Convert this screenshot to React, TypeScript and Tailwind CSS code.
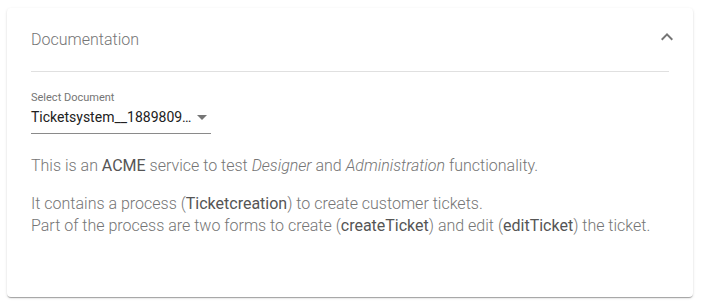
import React, { useState } from 'react'

export default function App() {
  const [open, setOpen] = useState(true)

  return (
    <div className="w-[702px] h-[306px] bg-white pt-2 pl-[7px]" style={{ fontFamily: 'Roboto, "Liberation Sans", sans-serif' }}>
      <div className="w-[686px] h-[289px] bg-white rounded-[4px] shadow-[0_2px_1px_-1px_rgba(0,0,0,0.2),0_1px_1px_0_rgba(0,0,0,0.14),0_1px_3px_0_rgba(0,0,0,0.12)] px-6">
        {/* Header */}
        <button
          onClick={() => setOpen(!open)}
          className="w-full h-16 flex items-center justify-between border-b border-[#e0e0e0] text-left"
        >
          <span className="text-[16px] text-[#757575] font-light">Documentation</span>
          <svg width="24" height="24" viewBox="0 0 24 24" className="mr-[-10px] mt-[-6px]" fill="#757575">
            <path d="M7.41 15.41 12 10.83l4.59 4.58L18 14l-6-6-6 6z" />
          </svg>
        </button>

        {open && (
          <div className="pt-[19px]">
            {/* Select */}
            <div className="w-[180px]">
              <label className="block text-[11px] leading-[13px] text-[#757575]">Select Document</label>
              <div className="flex items-center justify-between h-[30px] pb-[2px] border-b border-[#8a8a8a]">
                <span className="text-[14px] text-[#212121] whitespace-nowrap">Ticketsystem__1889809…</span>
                <svg width="10" height="5" viewBox="0 0 10 5" className="mr-[4px] shrink-0" fill="#757575">
                  <path d="M0 0l5 5 5-5z" />
                </svg>
              </div>
            </div>

            {/* Description */}
            <div className="mt-[21px] text-[16px] leading-[22px] text-[#757575] font-light">
              <p>
                This is an <b className="font-normal text-[#555555]">ACME</b> service to test <i>Designer</i> and{' '}
                <i>Administration</i> functionality.
              </p>
              <p className="mt-4">
                It contains a process (<b className="font-normal text-[#555555]">Ticketcreation</b>) to create customer tickets.
                <br />
                Part of the process are two forms to create (<b className="font-normal text-[#555555]">createTicket</b>) and edit (
                <b className="font-normal text-[#555555]">editTicket</b>) the ticket.
              </p>
            </div>
          </div>
        )}
      </div>
    </div>
  )
}
